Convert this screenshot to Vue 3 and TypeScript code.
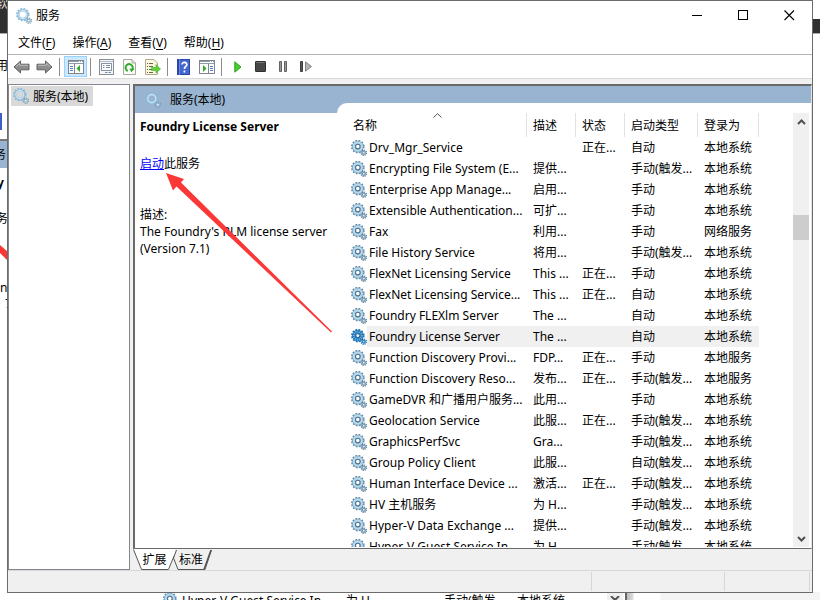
<script setup lang="ts">
import { ref } from 'vue'

interface Service {
  name: string
  desc: string
  status: string
  startup: string
  logon: string
}

const RUNNING = '正在...'
const TRIGGER = '手动(触发...'
const LOCAL = '本地系统'

function svc(name: string, desc: string, status: string, startup: string, logon = LOCAL): Service {
  return { name, desc, status, startup, logon }
}

const services: Service[] = [
  svc('Drv_Mgr_Service', '', RUNNING, '自动'),
  svc('Encrypting File System (E...', '提供...', '', TRIGGER),
  svc('Enterprise App Manage...', '启用...', '', '手动'),
  svc('Extensible Authentication...', '可扩...', '', '手动'),
  svc('Fax', '利用...', '', '手动', '网络服务'),
  svc('File History Service', '将用...', '', TRIGGER),
  svc('FlexNet Licensing Service', 'This ...', RUNNING, '手动'),
  svc('FlexNet Licensing Service...', 'This ...', RUNNING, '自动'),
  svc('Foundry FLEXlm Server', 'The ...', '', '自动'),
  svc('Foundry License Server', 'The ...', '', '自动'),
  svc('Function Discovery Provi...', 'FDP...', RUNNING, '手动', '本地服务'),
  svc('Function Discovery Reso...', '发布...', RUNNING, TRIGGER, '本地服务'),
  svc('GameDVR 和广播用户服务...', '此用...', '', '手动'),
  svc('Geolocation Service', '此服...', RUNNING, TRIGGER),
  svc('GraphicsPerfSvc', 'Gra...', '', TRIGGER),
  svc('Group Policy Client', '此服...', '', '自动(触发...'),
  svc('Human Interface Device ...', '激活...', RUNNING, TRIGGER),
  svc('HV 主机服务', '为 H...', '', TRIGGER),
  svc('Hyper-V Data Exchange ...', '提供...', '', TRIGGER),
  svc('Hyper-V Guest Service In...', '为 H...', '', TRIGGER),
]

const menus = [
  { label: '文件', key: 'F' },
  { label: '操作', key: 'A' },
  { label: '查看', key: 'V' },
  { label: '帮助', key: 'H' },
]

const selected = ref('Foundry License Server')
const tab = ref('extended')
</script>

<template>
  <div class="desktop">
    <svg class="defs" width="0" height="0" aria-hidden="true">
      <symbol id="gear" viewBox="0 0 16 16">
        <circle cx="6.8" cy="6.6" r="5.9" fill="none" stroke="#5f86a2" stroke-width="1.8" stroke-dasharray="1.7 1.39" />
        <circle cx="6.8" cy="6.600" r="3.900" fill="none" stroke="#7fa6c0" stroke-width="3.800" />
        <circle cx="6.800" cy="6.600" r="4" fill="none" stroke="#b5daef" stroke-width="2.200" />
        <circle cx="6.800" cy="6.600" r="2.300" fill="#fff" stroke="#54758f" stroke-width="1.100" />
        <circle cx="12.800" cy="12.700" r="2.600" fill="none" stroke="#54788f" stroke-width="1.400" stroke-dasharray="1.100 0.940" />
        <circle cx="12.800" cy="12.700" r="1.500" fill="#fff" stroke="#7ba3bd" stroke-width="1.500" />
      </symbol>
      <symbol id="gear-light" viewBox="0 0 16 16">
        <circle cx="6.800" cy="6.600" r="5.900" fill="none" stroke="#8bb5d0" stroke-width="1.700" stroke-dasharray="1.700 1.390" />
        <circle cx="6.800" cy="6.600" r="4.400" fill="none" stroke="#92c0dc" stroke-width="2.600" />
        <circle cx="6.800" cy="6.600" r="4" fill="none" stroke="#cfe7f5" stroke-width="1.100" />
        <circle cx="12.800" cy="12.700" r="2.600" fill="none" stroke="#7498ae" stroke-width="1.300" stroke-dasharray="1.100 0.940" />
        <circle cx="12.800" cy="12.700" r="1.500" fill="#e5f1f8" stroke="#94b8ce" stroke-width="1.300" />
      </symbol>
      <symbol id="gear-selected" viewBox="0 0 16 16">
        <circle cx="6.800" cy="6.600" r="5.900" fill="none" stroke="#1b70ae" stroke-width="1.800" stroke-dasharray="1.700 1.390" />
        <circle cx="6.800" cy="6.600" r="3.900" fill="none" stroke="#2274b2" stroke-width="3.800" />
        <circle cx="6.800" cy="6.600" r="4" fill="none" stroke="#6bb4e6" stroke-width="2.200" stroke-dasharray="1 1" />
        <circle cx="6.800" cy="6.600" r="2" fill="#e3f0f9" stroke="#1f5d8b" stroke-width="1" />
        <circle cx="12.800" cy="12.700" r="2.600" fill="none" stroke="#1b70ae" stroke-width="1.400" stroke-dasharray="1.100 0.940" />
        <circle cx="12.800" cy="12.700" r="1.400" fill="#d5e8f5" stroke="#3789c4" stroke-width="1.500" />
      </symbol>
    </svg>

    <div class="backdrop" aria-hidden="true">
      <div class="bg-dark"></div>
      <div class="bg-right"></div>
      <div class="bg-tool"></div>
      <div class="bg-head"></div>
      <svg class="bg-arrow" width="8" height="20" viewBox="0 0 8 20"><path d="M0 2 8 9v9L0 10z" fill="#fb3434" /></svg>
      <span class="bg-text t0">软</span>
      <span class="bg-text t1">用</span>
      <span class="bg-text t2">务</span>
      <b class="bg-text t3">y</b>
      <span class="bg-text t4">务</span>
      <span class="bg-text t5">ns</span>
      <span class="bg-text t6">7</span>
      <div class="bg-row">
        <svg class="icon"><use href="#gear" /></svg>
        <span class="bn">Hyper-V Guest Service In...</span>
        <span class="bd">为 H...</span>
        <span class="bs">手动(触发...</span>
        <span>本地系统</span>
      </div>
      <div class="bg-scroll">
        <svg width="10" height="6" viewBox="0 0 10 6"><path d="M1 0 5 4 9 0" fill="none" stroke="#555" stroke-width="2" /></svg>
      </div>
      <div class="bg-edge"></div>
    </div>

    <main class="window">
      <header class="titlebar">
        <svg class="icon"><use href="#gear-light" /></svg>
        <h1>服务</h1>
        <div class="controls">
          <button type="button" aria-label="最小化"><svg width="11" height="11"><path d="M0 5.5h10" stroke="#000" /></svg></button>
          <button type="button" aria-label="最大化"><svg width="11" height="11"><rect x=".5" y=".5" width="9" height="9" fill="none" stroke="#000" /></svg></button>
          <button type="button" aria-label="关闭"><svg width="11" height="11"><path d="M.5.5 10 10M10 .5.5 10" stroke="#000" stroke-width="1.1" /></svg></button>
        </div>
      </header>

      <nav class="menubar">
        <button v-for="m in menus" :key="m.key" type="button">{{ m.label }}(<u>{{ m.key }}</u>)</button>
      </nav>

      <div class="toolbar" role="toolbar">
        <button type="button" aria-label="后退">
          <svg width="17" height="14" viewBox="0 0 17 14"><path d="M1 7 7.5 1v3.2H16v5.6H7.5V13z" fill="#8d8d8d" stroke="#606060" /><path d="M3 6.6 6.6 3.3v2H15" fill="none" stroke="#bdbdbd" /></svg>
        </button>
        <button type="button" aria-label="前进">
          <svg width="17" height="14" viewBox="0 0 17 14"><path d="M16 7 9.5 1v3.2H1v5.6h8.500V13z" fill="#8d8d8d" stroke="#606060" /><path d="M2 5.300h8.400v-2L14 6.600" fill="none" stroke="#bdbdbd" /></svg>
        </button>
        <span class="sep"></span>
        <button type="button" class="active" aria-label="显示/隐藏控制台树">
          <svg width="16" height="14" viewBox="0 0 16 14"><rect x=".5" y=".5" width="15" height="13" fill="#fff" stroke="#7e8791" /><path d="M1 1.500h14M1 3.500h14" stroke="#8f9ba8" /><path d="M11 1.500h1m1 0h1" stroke="#fff" /><path d="M6.500 4v9" stroke="#7e8791" /><path d="M2 6.500h3M2 8.500h3M2 10.500h3" stroke="#4d83c4" /><path d="M12 5v7L8.500 8.500z" fill="#35a82a" /></svg>
        </button>
        <span class="sep"></span>
        <button type="button" aria-label="属性">
          <svg width="15" height="16" viewBox="0 0 15 16"><rect x=".5" y=".5" width="14" height="15" fill="#f5f5f5" stroke="#898f96" /><path d="M1 2.500h13" stroke="#bac0c7" /><rect x="2.500" y="4.500" width="10" height="7" fill="#fff" stroke="#8798aa" /><path d="M4 6.500h1.500M7 6.500h4M4 8.500h1.500M7 8.500h4M6 13.500h2.500m1 0H12" stroke="#7590ad" /></svg>
        </button>
        <button type="button" aria-label="刷新">
          <svg width="13" height="16" viewBox="0 0 13 16"><path d="M.5.5h8.500l3.500 3.500v11.500H.5z" fill="#fbfbf7" stroke="#a8a8a0" /><path d="M9 .5V4h3.500" fill="none" stroke="#a8a8a0" /><path d="M4.700 12A3.600 3.600 0 1 1 9.300 10.500" fill="none" stroke="#32ac2e" stroke-width="2" /><path d="M6.500 9.500 11.500 10 8.300 13.200z" fill="#32ac2e" /></svg>
        </button>
        <button type="button" aria-label="导出列表">
          <svg width="16" height="16" viewBox="0 0 16 16"><path d="M.5.5h8.500l3.500 3.500v11.500H.5z" fill="#fdf7d9" stroke="#b0a98c" /><path d="M2 4.500h1m1 0h4M2 7.500h1m1 0h4M2 10.500h1m1 0h3M2 13.500h1m1 0h4" stroke="#646464" /><path d="M6.500 8.500H11V5.500L15.500 10 11 14v-2.500H6.500z" fill="#62d13b" stroke="#3eae29" stroke-width=".6" /></svg>
        </button>
        <span class="sep"></span>
        <button type="button" aria-label="帮助">
          <svg width="13" height="16" viewBox="0 0 13 16"><rect width="13" height="16" fill="#2b48a6" /><path d="M2.500 0V16" stroke="#6a87dc" /><path d="M3 1h9v14H3z" fill="#4267cf" /><path d="M5 5.500C5 2.500 10.200 2.800 9.800 5.800 9.600 7.400 7.400 7.500 7.400 10M7.400 11.500v2" fill="none" stroke="#fff" stroke-width="1.700" /></svg>
        </button>
        <button type="button" aria-label="显示/隐藏操作窗格">
          <svg width="16" height="14" viewBox="0 0 16 14"><rect x=".5" y=".5" width="15" height="13" fill="#fff" stroke="#7e8791" /><path d="M1 1.500h14M1 3.500h14" stroke="#8f9ba8" /><path d="M11 1.500h1m1 0h1" stroke="#fff" /><path d="M9.500 4v9" stroke="#7e8791" /><path d="M11 6.500h3M11 8.500h3M11 10.500h3" stroke="#4d83c4" /><path d="M4 5v7l3.500-3.500z" fill="#35a82a" /></svg>
        </button>
        <span class="sep"></span>
        <button type="button" aria-label="启动服务">
          <svg width="8" height="12" viewBox="0 0 8 12"><path d="M.8.8 7 6 .8 11.200z" fill="#45cf2c" stroke="#2da31b" /></svg>
        </button>
        <button type="button" aria-label="停止服务">
          <svg width="11" height="11" viewBox="0 0 11 11"><rect x=".5" y=".5" width="10" height="10" rx=".5" fill="#474747" stroke="#303030" /><path d="M1.500 1.500h8" stroke="#777" /></svg>
        </button>
        <button type="button" aria-label="暂停服务">
          <svg width="9" height="11" viewBox="0 0 9 11"><path d="M.5.500h2v10h-2zM5.500.500h2v10h-2z" fill="#9a9a9a" stroke="#626262" /></svg>
        </button>
        <button type="button" aria-label="重新启动服务">
          <svg width="13" height="11" viewBox="0 0 13 11"><path d="M.5.500h2v10h-2z" fill="#555" stroke="#404040" /><path d="M5.500.800v9.400L11.500 5.500z" fill="#b4b4b4" stroke="#858585" /></svg>
        </button>
      </div>

      <div class="workspace">
        <aside class="tree">
          <button type="button" class="node"><svg class="icon"><use href="#gear-light" /></svg>服务(本地)</button>
        </aside>

        <div class="right">
          <section class="panel">
            <div class="panel-head"><svg class="icon"><use href="#gear-light" /></svg>服务(本地)</div>
            <div class="panel-body">
              <div class="info">
                <h2>{{ selected }}</h2>
                <p class="action"><a href="#start">启动</a>此服务</p>
                <p>描述:<br />The Foundry's RLM license server (Version 7.1)</p>
              </div>

              <div class="list">
                <div class="rows">
                  <table>
                    <colgroup><col class="c1" /><col class="c2" /><col class="c2" /><col class="c4" /><col class="c5" /></colgroup>
                    <thead>
                      <tr>
                        <th class="sorted">名称<svg width="9" height="6" viewBox="0 0 9 6"><path d="M.5 4.500 4.500.700 8.500 4.500" fill="none" stroke="#555" /></svg></th>
                        <th>描述</th><th>状态</th><th>启动类型</th><th>登录为</th>
                      </tr>
                    </thead>
                    <tbody>
                      <tr v-for="s in services" :key="s.name" :class="{ selected: s.name === selected }" @click="selected = s.name">
                        <td class="name"><svg class="icon"><use :href="s.name === selected ? '#gear-selected' : '#gear'" /></svg><span>{{ s.name }}</span></td>
                        <td>{{ s.desc }}</td><td>{{ s.status }}</td><td>{{ s.startup }}</td><td>{{ s.logon }}</td>
                      </tr>
                    </tbody>
                  </table>
                </div>
                <div class="scrollbar">
                  <svg width="9" height="6" viewBox="0 0 9 6"><path d="M1 5 4.500 1.500 8 5" fill="none" stroke="#505050" stroke-width="2" /></svg>
                  <div class="track"><div class="thumb"></div></div>
                  <svg width="9" height="6" viewBox="0 0 9 6"><path d="M1 1 4.500 4.500 8 1" fill="none" stroke="#505050" stroke-width="2" /></svg>
                </div>
              </div>
            </div>
          </section>

          <div class="tabs" role="tablist">
            <button type="button" role="tab" :aria-selected="tab === 'extended'" @click="tab = 'extended'">
              <svg class="shape" width="42" height="22" viewBox="0 0 42 22"><path d="M0 0 8 20.500H36L42 6V0z" fill="#fff" /><path d="M.5.500 8.500 20.500H35.500L41 7" fill="none" stroke="#555" /></svg>
              <span>扩展</span>
            </button>
            <button type="button" role="tab" :aria-selected="tab === 'standard'" @click="tab = 'standard'">
              <svg class="shape" width="40" height="22" viewBox="0 0 40 22"><path d="M3.500 1 .500 9 5 20.500H32L38.500 1" fill="#f0f0f0" stroke="#555" /><path d="M31 20.500 38 1" stroke="#555" stroke-width="1.500" /></svg>
              <span>标准</span>
            </button>
          </div>
        </div>
      </div>

      <footer class="status"><span class="grow"></span><span class="mid"></span><span class="end"></span></footer>
    </main>

    <svg class="pointer" width="170" height="164" viewBox="0 0 170 164" aria-hidden="true">
      <path d="M2 3 20 9 17 12.500 168 161.500 167 162.500 12.500 16.500 9 20.500z" fill="#fb3838" />
    </svg>
  </div>
</template>

<style>
body {
  margin: 0;
  overflow: hidden;
}
</style>

<style scoped>
* {
  box-sizing: border-box;
}
.desktop {
  position: relative;
  height: 100vh;
  display: flex;
  padding: 0 7px 7px;
  overflow: hidden;
  background: #fff;
  color: #000;
  font: 12px/17px "Noto Sans", "Noto Sans CJK SC", sans-serif;
}
.defs {
  position: absolute;
}
.icon {
  width: 16px;
  height: 16px;
  flex: none;
}
button {
  margin: 0;
  padding: 0;
  border: 0;
  background: none;
  color: inherit;
  font: inherit;
}
h1,
h2,
p {
  margin: 0;
  font-size: 12px;
}
h1 {
  font-weight: 400;
}

/* Content showing round the edges of the window */
.backdrop > * {
  position: absolute;
}
.bg-dark {
  inset: 0 0 auto 0;
  height: 34px;
  background: #303030;
  border-bottom: 1px solid #aaa;
}
.bg-right {
  right: 0;
  top: 0;
  width: 8px;
  height: 19px;
  background: #fff;
}
.bg-tool {
  left: 0;
  top: 113px;
  width: 2px;
  height: 17px;
  background: #3d5fc9;
}
.bg-head {
  left: 0;
  top: 139px;
  width: 8px;
  height: 29px;
  background: #99b4d1;
  border-top: 2px solid #777;
}
.bg-arrow {
  left: 0;
  top: 243px;
}
.bg-text {
  width: 12px;
}
.t0 {
  left: -4px;
  top: -5px;
  color: #ddd;
}
.t1 {
  left: -4px;
  top: 57px;
}
.t2 {
  left: -6px;
  top: 146px;
}
.t3 {
  left: -3px;
  top: 174px;
}
.t4 {
  left: -4px;
  top: 210px;
}
.t5 {
  left: 0;
  top: 279px;
}
.t6 {
  left: 5px;
  top: 295px;
}
.bg-row {
  left: 163px;
  top: 592px;
  display: flex;
  white-space: nowrap;
}
.bg-row .bn {
  width: 164px;
  margin-left: 3px;
}
.bg-row .bd {
  width: 98px;
}
.bg-row .bs {
  width: 73px;
}
.bg-scroll {
  left: 607px;
  bottom: 0;
  width: 16px;
  height: 8px;
  background: #f0f0f0;
  text-align: center;
  line-height: 1;
}
.bg-edge {
  left: 625px;
  right: 0;
  bottom: 0;
  height: 8px;
  border-left: 2px solid #666;
  background: linear-gradient(90deg, #bbb, #ddd 6px, #fff 7px, #fff 33px, #f4f4f4 34px);
}

.window {
  position: relative;
  flex: 1;
  min-width: 0;
  display: flex;
  flex-direction: column;
  border: 1px solid #6b6b6b;
  background: #f0f0f0;
}
.titlebar {
  display: flex;
  align-items: center;
  gap: 4px;
  height: 29px;
  padding-left: 8px;
  background: #fff;
}
.controls {
  display: flex;
  margin-left: auto;
}
.controls button {
  width: 46px;
  height: 29px;
  display: grid;
  place-items: center;
}
.menubar {
  display: flex;
  gap: 17px;
  height: 25px;
  padding-left: 10px;
  border-bottom: 1px solid #b4b4b4;
  background: #fff;
}
.menubar u {
  text-underline-offset: 2px;
}
.toolbar {
  display: flex;
  align-items: center;
  height: 24px;
  padding-left: 2px;
  border-bottom: 1px solid #d9d9d9;
  background: #fff;
}
.toolbar button {
  width: 23px;
  height: 21px;
  display: grid;
  place-items: center;
}
.toolbar .active {
  background: #cce8ff;
  border: 1px solid #99d1ff;
}
.sep {
  width: 1px;
  height: 18px;
  margin: 0 4px 0 3px;
  background: #8c8c8c;
}

.workspace {
  flex: 1;
  min-height: 0;
  display: flex;
  gap: 3px;
  padding-top: 5px;
}
.tree {
  width: 122px;
  flex: none;
  padding: 1px 2px;
  border: 1px solid #828790;
  background: #fff;
}
.node {
  display: flex;
  align-items: center;
  gap: 4px;
  height: 20px;
  padding: 0 5px 0 2px;
  background: #d9d9d9;
}
.right {
  flex: 1;
  min-width: 0;
  display: flex;
  flex-direction: column;
}
.panel {
  flex: 1;
  min-height: 0;
  display: flex;
  flex-direction: column;
  border: solid #696969;
  border-width: 2px 1px 1px 2px;
  border-right-color: #e3e3e3;
  background: #fff;
}
.panel-head {
  flex: none;
  display: flex;
  align-items: center;
  gap: 9px;
  height: 27px;
  padding-left: 10px;
  background: #99b4d1;
}
.panel-body {
  flex: 1;
  min-height: 0;
  display: flex;
}
.info {
  width: 202px;
  flex: none;
  padding: 5px 0 0 5px;
}
.action {
  margin: 20px 0 34px;
}
.action a {
  color: #00f;
}
.list {
  flex: 1;
  min-width: 0;
  display: flex;
  justify-content: space-between;
  margin-top: -10px;
  padding: 10px 2px 1px 13px;
  border-top-left-radius: 10px;
  background: #fff;
}
.rows {
  overflow: hidden;
}
table {
  width: 409px;
  table-layout: fixed;
  border-collapse: collapse;
}
.c1 {
  width: 177px;
}
.c2 {
  width: 49px;
}
.c4 {
  width: 73px;
}
.c5 {
  width: 61px;
}
th {
  height: 24px;
  padding: 0 0 0 6px;
  font-weight: 400;
  text-align: left;
  white-space: nowrap;
  background: linear-gradient(#e2e2e2, #e2e2e2) right / 1px 100% no-repeat;
}
.sorted {
  position: relative;
  padding-left: 3px;
}
.sorted svg {
  position: absolute;
  left: 83px;
  top: 0;
}
td {
  height: 21px;
  padding: 0 0 0 6px;
  white-space: nowrap;
}
.name {
  display: flex;
  align-items: center;
  gap: 2px;
  padding-left: 1px;
}
.selected td {
  background: #f0f0f0;
}
.selected .name {
  background: linear-gradient(90deg, #fff 17px, #f0f0f0 17px);
}
.scrollbar {
  width: 16px;
  flex: none;
  display: flex;
  flex-direction: column;
  align-items: center;
  padding: 6px 0 5px;
  background: #f0f0f0;
}
.track {
  flex: 1;
  align-self: stretch;
  padding-top: 90px;
}
.thumb {
  height: 25px;
  background: #cdcdcd;
}
.tabs {
  display: flex;
  height: 21px;
}
.tabs button {
  position: relative;
  width: 40px;
  height: 21px;
  padding-left: 3px;
}
.tabs button + button {
  padding: 0 4px 0 0;
}
.shape {
  position: absolute;
  left: 0;
  top: 0;
}
.tabs span {
  position: relative;
}
.status {
  display: flex;
  height: 22px;
  padding: 1px 2px 1px 0;
  border-top: 1px solid #d7d7d7;
}
.status span {
  border-right: 1px solid #d7d7d7;
}
.grow {
  flex: 1;
}
.mid {
  width: 133px;
}
.end {
  width: 85px;
}
.pointer {
  position: absolute;
  left: 164px;
  top: 170px;
  pointer-events: none;
}
</style>
